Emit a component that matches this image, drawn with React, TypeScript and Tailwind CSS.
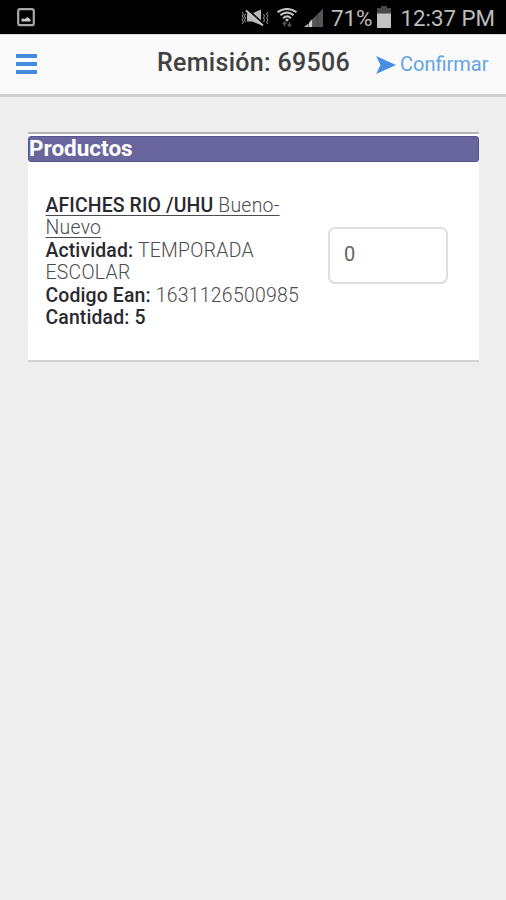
import React from "react";

function PictureIcon() {
  return (
    <svg className="ml-[17px] mt-[8px] h-[19px] w-[18px]" viewBox="0 0 18 19">
      <rect x="1.2" y="1.2" width="15.6" height="16" rx="2" fill="none" stroke="#a8a8a8" strokeWidth="2.2" />
      <path d="M4.5 13.5V11L6.5 10.5L8 11L10.5 9L13.5 11.5V13.5Z" fill="#c8c8c8" />
    </svg>
  );
}

function MuteIcon() {
  return (
    <svg className="h-[20px] w-[28px]" viewBox="0 0 28 20" fill="none">
      <path d="M6 5.5H11L20 1.5V17L11 13.5H6Z" fill="#b9b9b9" />
      <path d="M6 1L23 16.5" stroke="#000" strokeWidth="2" />
      <path d="M5 2.5L22 17.5" stroke="#c6c6c6" strokeWidth="1.8" />
      <path d="M1 4L2.5 6L1 8L2.5 10L1 12L2.5 14L1 16M4.5 6L3.5 8L4.5 10L3.5 12L4.5 14M27 4L25.5 6L27 8L25.5 10L27 12L25.5 14L27 16M22.5 6L23.5 8L22.5 10L23.5 12L22.5 14" stroke="#a0a0a0" strokeWidth="1" />
    </svg>
  );
}

function WifiIcon() {
  return (
    <svg className="ml-[8px] h-[20px] w-[20px]" viewBox="0 0 20 20" fill="none">
      <path d="M.5 4.2Q10 -2.2 19.5 4.2M3.4 7.2Q10 2.2 16.6 7.2M6.2 10.2Q10 6.6 13.8 10.2" stroke="#c4c4c4" strokeWidth="2.1" />
      <path d="M8 11.8L10 10.4L12 11.8L10 13.8Z" fill="#c4c4c4" />
      <path d="M7.5 18.5V14M5.8 16L7.5 14L9.2 16M12.5 14V18.5M10.8 16.5L12.5 18.5L14.2 16.5" stroke="#555" strokeWidth="1.4" />
    </svg>
  );
}

function SignalIcon() {
  return (
    <svg className="ml-[7px] h-[20px] w-[20px]" viewBox="0 0 20 20">
      <path d="M0 19L4.5 15.5V19Z" fill="#bdbdbd" />
      <path d="M5 19V14.5L8.5 11V19Z" fill="#cfcfcf" />
      <path d="M8.5 19V11L19 .8V19Z" fill="#555" />
      <path d="M13.7 6V19" stroke="#3c3c3c" strokeWidth=".8" />
    </svg>
  );
}

function BatteryIcon() {
  return (
    <svg className="ml-[4px] h-[22px] w-[14px]" viewBox="0 0 14 22">
      <path d="M0 2H4V0H10V2H14V22H0Z" fill="#474747" />
      <path d="M0 7.5H14V22H0Z" fill="#c3c3c3" />
    </svg>
  );
}

export default function App() {
  return (
    <div className="flex h-[900px] w-[506px] flex-col overflow-hidden bg-[#eeeeee] font-['Roboto','Noto_Sans',sans-serif] text-[#444]">
      <div className="flex h-[34px] shrink-0 bg-black text-[#bcbcbc]">
        <PictureIcon />
        <div className="ml-[206px] flex pt-[8px]">
          <MuteIcon />
          <WifiIcon />
          <SignalIcon />
        </div>
        <div className="ml-[7px] w-[42px] whitespace-nowrap pt-[6px] text-[22.5px] leading-[25px] tracking-[-0.2px]">71%</div>
        <div className="pt-[6px]">
          <BatteryIcon />
        </div>
        <div className="ml-[9.5px] whitespace-nowrap pt-[6px] text-[22.3px] leading-[25px]">12:37 PM</div>
      </div>
      <header className="flex h-[63px] shrink-0 border-b-[3px] border-t border-b-[#cecece] border-t-[#dedede] bg-[#fafafa]">
        <div className="ml-[16px] flex w-[141px] flex-col gap-[4px] pt-[19px]">
          <span className="h-[4px] w-[21px] bg-[#438bdc]" />
          <span className="h-[4px] w-[21px] bg-[#438bdc]" />
          <span className="h-[4px] w-[21px] bg-[#438bdc]" />
        </div>
        <h1 className="w-[219px] whitespace-nowrap pt-[13px] text-[25px] font-medium leading-[30px] tracking-[0.3px] text-[#414144]">Remisión: 69506</h1>
        <svg className="mt-[21px] h-[18px] w-[20px]" viewBox="0 0 20 18">
          <path d="M0 0L20 9L0 18L4.5 9Z" fill="#448fdf" />
        </svg>
        <a className="ml-[4px] whitespace-nowrap pt-[17px] text-[20px] leading-[24px] text-[#64a3e5]">Confirmar</a>
      </header>
      <main className="ml-[28px] mt-[35px] flex h-[230px] w-[451px] flex-col border-b-2 border-t-2 border-b-[#d2d2d2] border-t-[#b5b5b5] bg-white">
        <h2 className="mt-[2px] h-[26px] shrink-0 rounded-[3px] border border-[#57518d] bg-[#68669d] text-[22.5px] font-bold leading-[23px] text-white">Productos</h2>
        <div className="flex pl-[17.5px]">
          <div className="w-[282.5px] whitespace-nowrap pt-[32.5px] text-[19.4px] font-light leading-[22.5px] tracking-[0.27px] text-[#4b4b4f] [&_b]:font-medium [&_b]:tracking-[0.14px] [&_b]:text-[#29292f]">
            <p className="underline decoration-1 underline-offset-[3px]"><b>AFICHES RIO /UHU</b> Bueno-<br />Nuevo</p>
            <p><b>Actividad:</b> TEMPORADA<br />ESCOLAR</p>
            <p><b>Codigo Ean:</b> 1631126500985</p>
            <p><b>Cantidad: 5</b></p>
          </div>
          <div className="mt-[65px] flex h-[57px] w-[120px] items-center rounded-[7px] border-2 border-[#dedede] pl-[14px] pb-[3px] text-[20px] text-[#646464]">0</div>
        </div>
      </main>
    </div>
  );
}
